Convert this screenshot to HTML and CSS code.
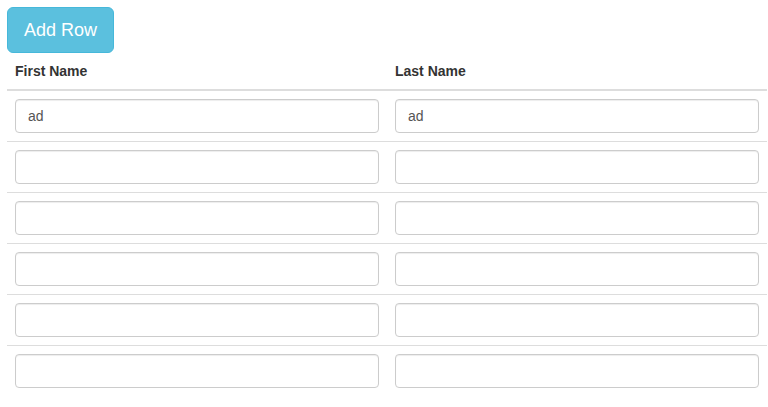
FILE: index.html
```html
<!DOCTYPE html>
<html lang="en">
<head>
    <meta charset="UTF-8">
    <meta name="viewport" content="width=device-width, initial-scale=1.0">
    <title>Add Row</title>
    <link rel="stylesheet" href="styles.css">
</head>
<body>
    <div class="wrap">
        <button class="btn-add">Add Row</button>
        <table class="grid">
            <thead>
                <tr>
                    <th>First Name</th>
                    <th>Last Name</th>
                </tr>
            </thead>
            <tbody>
                <tr>
                    <td><input type="text" value="ad"></td>
                    <td><input type="text" value="ad"></td>
                </tr>
                <tr>
                    <td><input type="text"></td>
                    <td><input type="text"></td>
                </tr>
                <tr>
                    <td><input type="text"></td>
                    <td><input type="text"></td>
                </tr>
                <tr>
                    <td><input type="text"></td>
                    <td><input type="text"></td>
                </tr>
                <tr>
                    <td><input type="text"></td>
                    <td><input type="text"></td>
                </tr>
                <tr>
                    <td><input type="text"></td>
                    <td><input type="text"></td>
                </tr>
            </tbody>
        </table>
    </div>
</body>
</html>
```

FILE: styles.css
```css
body {
    margin: 0;
    font-family: "Liberation Sans", Arial, sans-serif;
    font-size: 14px;
    line-height: 20px;
    color: #333;
    background: #fff;
}
.wrap {
    padding: 7px 1px 0 7px;
}
.btn-add {
    display: block;
    height: 46px;
    padding: 10px 16px;
    font-family: inherit;
    font-size: 18px;
    line-height: 24px;
    color: #fff;
    background-color: #5bc0de;
    border: 1px solid #46b8da;
    border-radius: 6px;
    cursor: pointer;
}
.grid {
    width: 760px;
    border-collapse: collapse;
    border-spacing: 0;
    table-layout: fixed;
}
.grid th {
    text-align: left;
    padding: 8px;
    line-height: 20px;
    font-weight: bold;
    border-bottom: 2px solid #ddd;
}
.grid td {
    padding: 8px;
    border-top: 1px solid #ddd;
}
.grid tbody tr:first-child td {
    border-top: 0;
}
.grid input {
    display: block;
    box-sizing: border-box;
    width: 100%;
    height: 34px;
    padding: 6px 12px;
    font-family: inherit;
    font-size: 14px;
    line-height: 20px;
    color: #555;
    background: #fff;
    border: 1px solid #ccc;
    border-radius: 4px;
    box-shadow: inset 0 1px 1px rgba(0, 0, 0, .075);
}
```
